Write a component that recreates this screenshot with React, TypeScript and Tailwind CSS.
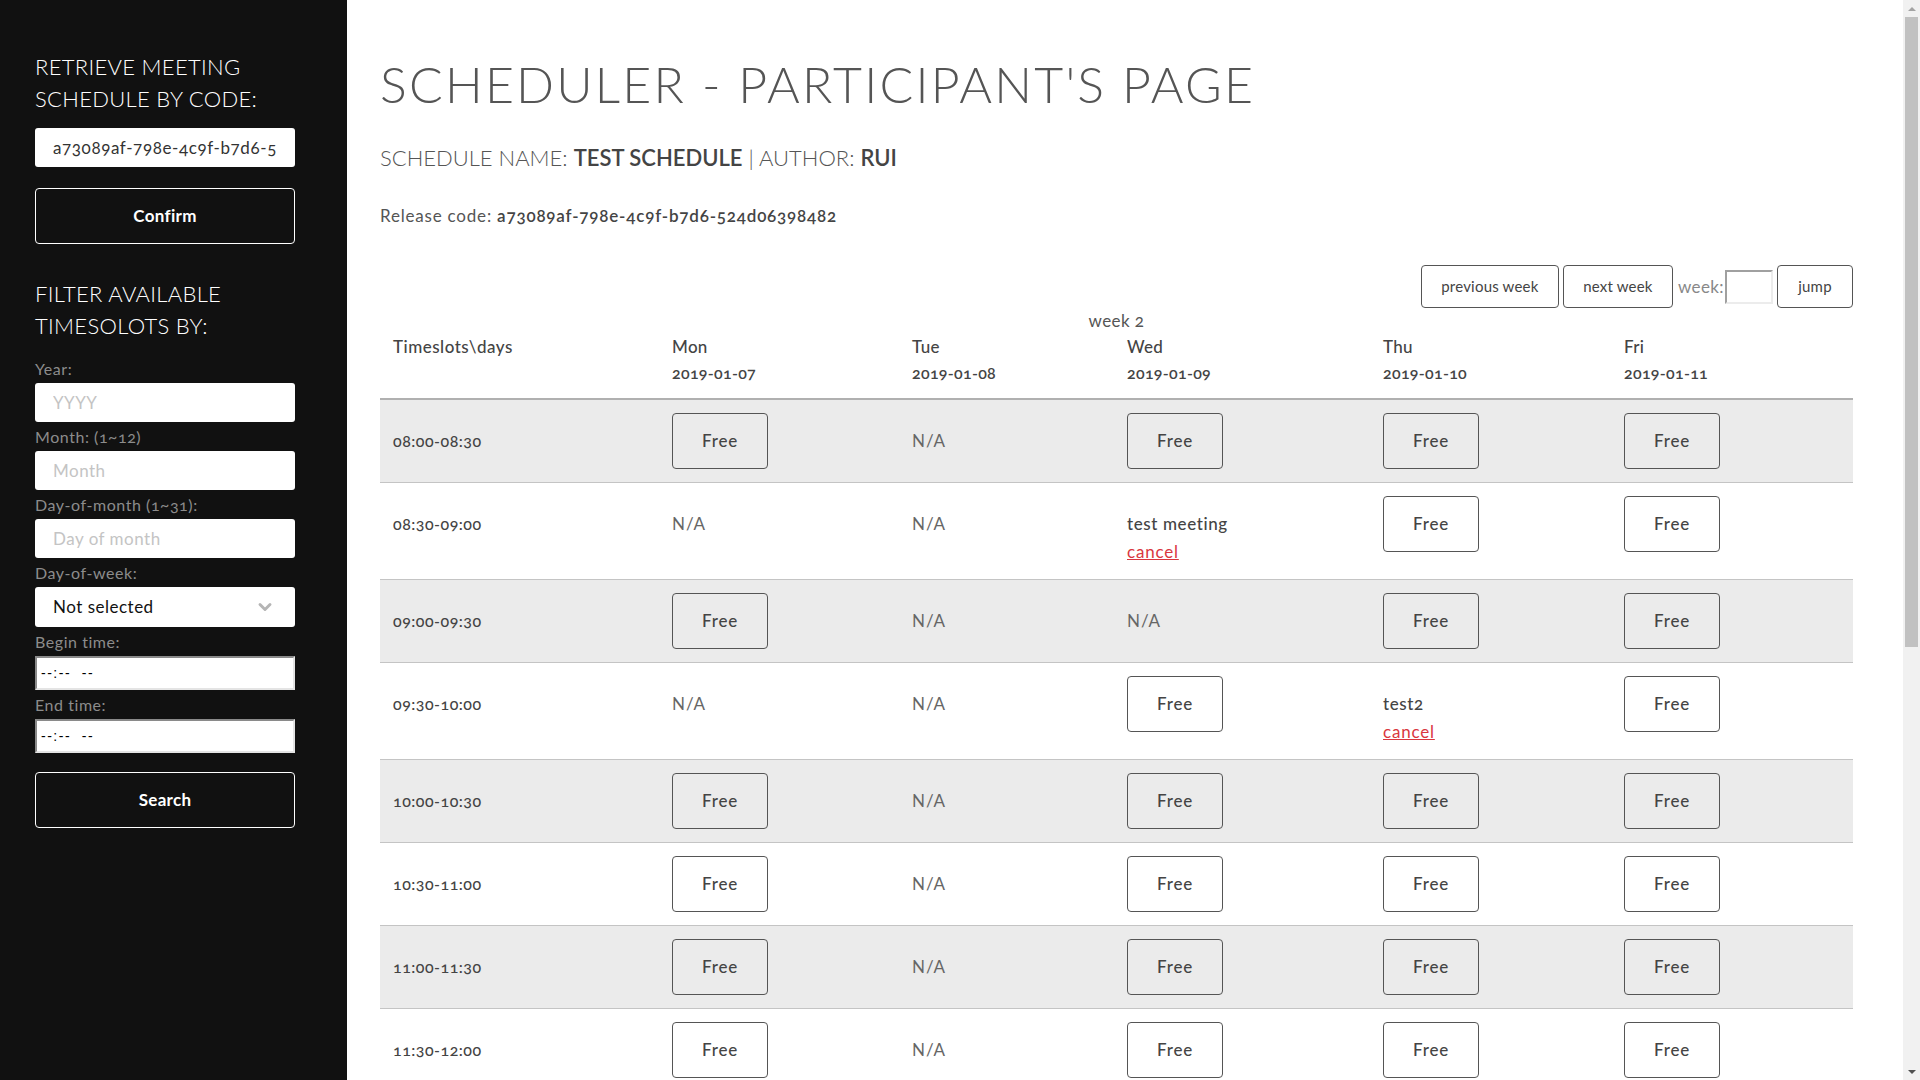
import { FC } from "react";
import { ChevronDown } from "lucide-react";

type Cell =
  | { kind: "free" }
  | { kind: "na" }
  | { kind: "meeting"; title: string };

const FREE: Cell = { kind: "free" };
const NA: Cell = { kind: "na" };

const days = [
  { name: "Mon", date: "2019-01-07", width: "w-[240px]" },
  { name: "Tue", date: "2019-01-08", width: "w-[215px]" },
  { name: "Wed", date: "2019-01-09", width: "w-[256px]" },
  { name: "Thu", date: "2019-01-10", width: "w-[241px]" },
  { name: "Fri", date: "2019-01-11", width: "w-[242px]" },
];

const pad = (n: number) => (n < 10 ? `0${n}` : `${n}`);

const slotLabel = (i: number) => {
  const start = 8 * 60 + i * 30;
  const end = start + 30;
  const fmt = (m: number) => `${pad(Math.floor(m / 60))}:${pad(m % 60)}`;
  return `${fmt(start)}-${fmt(end)}`;
};

// rows that differ from the usual Free / N/A / Free / Free / Free pattern
const special: Record<number, Cell[]> = {
  1: [NA, NA, { kind: "meeting", title: "test meeting" }, FREE, FREE],
  2: [FREE, NA, NA, FREE, FREE],
  3: [NA, NA, FREE, { kind: "meeting", title: "test2" }, FREE],
};

const rows = Array.from({ length: 16 }, (_, i) => ({
  label: slotLabel(i),
  cells: special[i] ?? [FREE, NA, FREE, FREE, FREE],
}));

const SideLabel: FC<{ text: string }> = ({ text }) => (
  <label className="block h-[29px] leading-[29px] text-[16px] tracking-[0.55px] text-[#8c8c8c]">
    {text}
  </label>
);

const SideInput: FC<{ placeholder: string }> = ({ placeholder }) => (
  <input
    type="text"
    placeholder={placeholder}
    className="block h-[39px] w-[260px] rounded-[3px] bg-white px-[18px] text-[17px] tracking-[0.5px] text-[#222] placeholder:text-[#c4c4c4] outline-none"
  />
);

const TimeInput = () => (
  <div className="flex h-[34px] w-[260px] items-center border-2 border-t-[#8a8a8a] border-l-[#8a8a8a] border-r-[#e4e4e4] border-b-[#e4e4e4] bg-white pl-[4px] font-['Liberation_Sans',sans-serif] text-[14px] tracking-[1.5px] text-black">
    --:--&nbsp;&nbsp;--
  </div>
);

const Sidebar = () => (
  <aside className="w-[347px] shrink-0 bg-[#111111] px-[35px] pt-[51px] pb-[40px]">
    <h2 className="text-[22px] leading-[32px] font-light text-white tracking-[0.3px]">
      RETRIEVE MEETING
      <br />
      SCHEDULE BY CODE:
    </h2>
    <input
      type="text"
      readOnly
      value="a73089af-798e-4c9f-b7d6-524d06398482"
      className="mt-[13px] block h-[39px] w-[260px] rounded-[3px] bg-white px-[18px] text-[17px] tracking-[0.6px] text-[#333] outline-none oldstyle-nums"
    />
    <button className="mt-[21px] block h-[56px] w-[260px] rounded-[4px] border border-white text-[17px] font-bold tracking-[0.3px] text-white">
      Confirm
    </button>
    <h2 className="mt-[34px] text-[22px] leading-[32px] font-light text-white tracking-[0.3px]">
      FILTER AVAILABLE
      <br />
      TIMESOLOTS BY:
    </h2>
    <div className="mt-[12px]">
      <SideLabel text="Year:" />
      <SideInput placeholder="YYYY" />
      <SideLabel text="Month: (1~12)" />
      <SideInput placeholder="Month" />
      <SideLabel text="Day-of-month (1~31):" />
      <SideInput placeholder="Day of month" />
      <SideLabel text="Day-of-week:" />
      <div className="flex h-[40px] w-[260px] items-center justify-between rounded-[3px] bg-white pl-[18px] pr-[20px] text-[17px] tracking-[0.5px] text-[#111]">
        <span>Not selected</span>
        <ChevronDown size={20} strokeWidth={3.5} className="text-[#b5b5b5]" />
      </div>
      <SideLabel text="Begin time:" />
      <TimeInput />
      <SideLabel text="End time:" />
      <TimeInput />
    </div>
    <button className="mt-[19px] block h-[56px] w-[260px] rounded-[4px] border border-white text-[17px] font-bold tracking-[0.3px] text-white">
      Search
    </button>
  </aside>
);

const SlotCell: FC<{ cell: Cell }> = ({ cell }) => {
  if (cell.kind === "free") {
    return (
      <button className="h-[56px] w-[96px] rounded-[4px] border border-[#555] text-[17px] font-medium tracking-[0.8px] text-[#444]">
        Free
      </button>
    );
  }
  if (cell.kind === "na") {
    return <span className="tracking-[0.9px] text-[#666]">N/A</span>;
  }
  return (
    <div>
      <div className="font-medium tracking-[0.6px] text-[#444]">{cell.title}</div>
      <a href="#" className="tracking-[0.8px] text-[#d9363e] underline">
        cancel
      </a>
    </div>
  );
};

const NavButton: FC<{ text: string; width: string }> = ({ text, width }) => (
  <button
    className={`h-[43px] ${width} rounded-[4px] border border-[#555] text-[15px] tracking-[0.2px] text-[#444]`}
  >
    {text}
  </button>
);

const Scrollbar = () => (
  <div className="flex h-screen w-[17px] shrink-0 flex-col self-start bg-[#f1f1f1]">
    <div className="flex h-[17px] items-center justify-center">
      <div className="h-0 w-0 border-x-[4px] border-b-[4px] border-x-transparent border-b-[#a3a3a3]" />
    </div>
    <div className="flex-1 px-[2px]">
      <div className="h-[630px] bg-[#c1c1c1]" />
    </div>
    <div className="flex h-[17px] items-center justify-center">
      <div className="h-0 w-0 border-x-[4px] border-t-[4px] border-x-transparent border-t-[#505050]" />
    </div>
  </div>
);

export default function App() {
  return (
    <div className="flex min-h-screen bg-white font-['Lato',sans-serif] oldstyle-nums">
      <Sidebar />
      <main className="flex-1 pl-[33px] pt-[54px] pb-[20px]">
        <div className="w-[1473px]">
          <h1 className="text-[50px] leading-[60px] font-light text-[#555] tracking-[2.2px]">
            SCHEDULER - PARTICIPANT'S PAGE
          </h1>
          <h3 className="mt-[30px] text-[22px] leading-[28px] font-light text-[#555]">
            SCHEDULE NAME:{" "}
            <span className="font-semibold text-[#444]">TEST SCHEDULE</span> | AUTHOR:{" "}
            <span className="font-semibold text-[#444]">RUI</span>
          </h3>
          <p className="mt-[32px] text-[17px] leading-[24px] tracking-[0.8px] text-[#555]">
            Release code:{" "}
            <span className="font-semibold text-[#444]">
              a73089af-798e-4c9f-b7d6-524d06398482
            </span>
          </p>

          <div className="mt-[37px] flex items-center justify-end">
            <NavButton text="previous week" width="w-[138px]" />
            <div className="w-[4px]" />
            <NavButton text="next week" width="w-[110px]" />
            <span className="ml-[5px] text-[17px] tracking-[0.4px] text-[#888]">week:</span>
            <input
              type="text"
              className="ml-[1px] h-[34px] w-[48px] border-2 border-t-[#a0a0a0] border-l-[#a0a0a0] border-r-[#ececec] border-b-[#ececec] outline-none"
            />
            <div className="w-[4px]" />
            <NavButton text="jump" width="w-[76px]" />
          </div>

          <div className="mt-[1px] h-[24px] text-center text-[17px] leading-[24px] tracking-[0.4px] text-[#555]">
            week 2
          </div>

          <table className="w-[1473px] border-collapse text-left text-[17px] leading-[26px]">
            <thead>
              <tr className="border-b-2 border-[#b0b0b0]">
                <th className="w-[279px] px-[13px] pt-[1px] pb-[12px] align-top font-medium tracking-[0.5px] text-[#444]">
                  Timeslots\days
                </th>
                {days.map((d) => (
                  <th
                    key={d.name}
                    className={`${d.width} px-[13px] pt-[1px] pb-[12px] align-top font-normal text-[#444]`}
                  >
                    <div className="font-medium tracking-[0.3px]">{d.name}</div>
                    <div className="text-[16px] font-semibold tracking-[0.3px]">{d.date}</div>
                  </th>
                ))}
              </tr>
            </thead>
            <tbody>
              {rows.map((r, i) => (
                <tr
                  key={r.label}
                  className={`border-b border-[#c4c4c4] ${i % 2 === 0 ? "bg-[#ebebeb]" : "bg-white"}`}
                >
                  <td className="px-[13px] py-[13px] align-baseline text-[16px] leading-[28px] font-medium tracking-[0.5px] text-[#444]">
                    {r.label}
                  </td>
                  {r.cells.map((c, j) => (
                    <td
                      key={j}
                      className="px-[13px] py-[13px] align-baseline leading-[28px]"
                    >
                      <SlotCell cell={c} />
                    </td>
                  ))}
                </tr>
              ))}
            </tbody>
          </table>
        </div>
      </main>
      <Scrollbar />
    </div>
  );
}
